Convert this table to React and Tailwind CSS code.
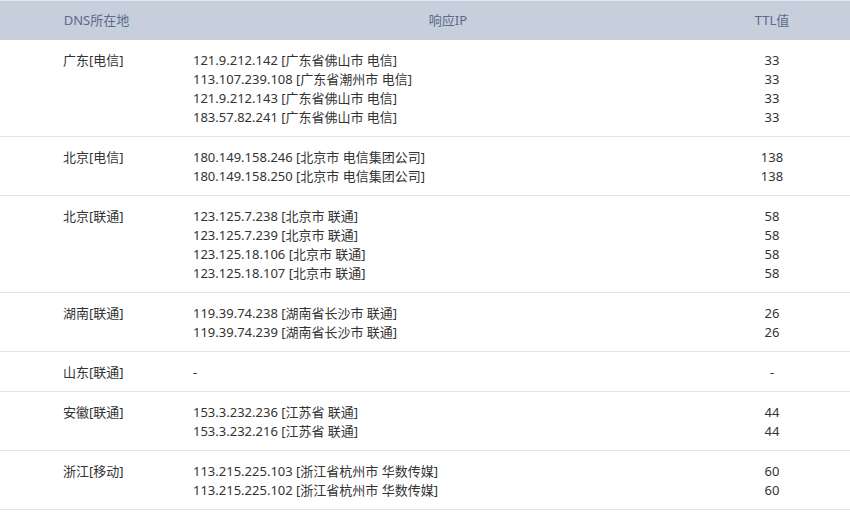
const ROWS = [
  {
    loc: '广东[电信]',
    ips: [
      ['121.9.212.142 [广东省佛山市 电信]', '33'],
      ['113.107.239.108 [广东省潮州市 电信]', '33'],
      ['121.9.212.143 [广东省佛山市 电信]', '33'],
      ['183.57.82.241 [广东省佛山市 电信]', '33'],
    ],
  },
  {
    loc: '北京[电信]',
    ips: [
      ['180.149.158.246 [北京市 电信集团公司]', '138'],
      ['180.149.158.250 [北京市 电信集团公司]', '138'],
    ],
  },
  {
    loc: '北京[联通]',
    ips: [
      ['123.125.7.238 [北京市 联通]', '58'],
      ['123.125.7.239 [北京市 联通]', '58'],
      ['123.125.18.106 [北京市 联通]', '58'],
      ['123.125.18.107 [北京市 联通]', '58'],
    ],
  },
  {
    loc: '湖南[联通]',
    ips: [
      ['119.39.74.238 [湖南省长沙市 联通]', '26'],
      ['119.39.74.239 [湖南省长沙市 联通]', '26'],
    ],
  },
  { loc: '山东[联通]', ips: [['-', '-']] },
  {
    loc: '安徽[联通]',
    ips: [
      ['153.3.232.236 [江苏省 联通]', '44'],
      ['153.3.232.216 [江苏省 联通]', '44'],
    ],
  },
  {
    loc: '浙江[移动]',
    ips: [
      ['113.215.225.103 [浙江省杭州市 华数传媒]', '60'],
      ['113.215.225.102 [浙江省杭州市 华数传媒]', '60'],
    ],
  },
];

export default function App() {
  return (
    <div
      className="w-[850px] bg-white text-[13px] text-[#333]"
      style={{ fontFamily: '"Noto Sans", "Noto Sans CJK SC", sans-serif' }}
    >
      {/* header */}
      <div className="grid grid-cols-[193px_510px_138px] h-[40px] items-center bg-[#c7cedc] border-t border-[#e3e6ec] text-[#5b6b8c]">
        <div className="text-center">DNS所在地</div>
        <div className="text-center">响应IP</div>
        <div className="text-center">TTL值</div>
      </div>

      {ROWS.map((row) => (
        <div
          key={row.loc}
          className="grid grid-cols-[193px_510px_138px] pt-[11px] pb-[9px] border-b border-[#e5e5e5] leading-[19px]"
        >
          <div className="pl-[63px]">{row.loc}</div>
          <div>
            {row.ips.map(([ip]) => (
              <div key={ip}>{ip}</div>
            ))}
          </div>
          <div className="text-center">
            {row.ips.map(([ip, ttl]) => (
              <div key={ip}>{ttl}</div>
            ))}
          </div>
        </div>
      ))}
    </div>
  );
}
